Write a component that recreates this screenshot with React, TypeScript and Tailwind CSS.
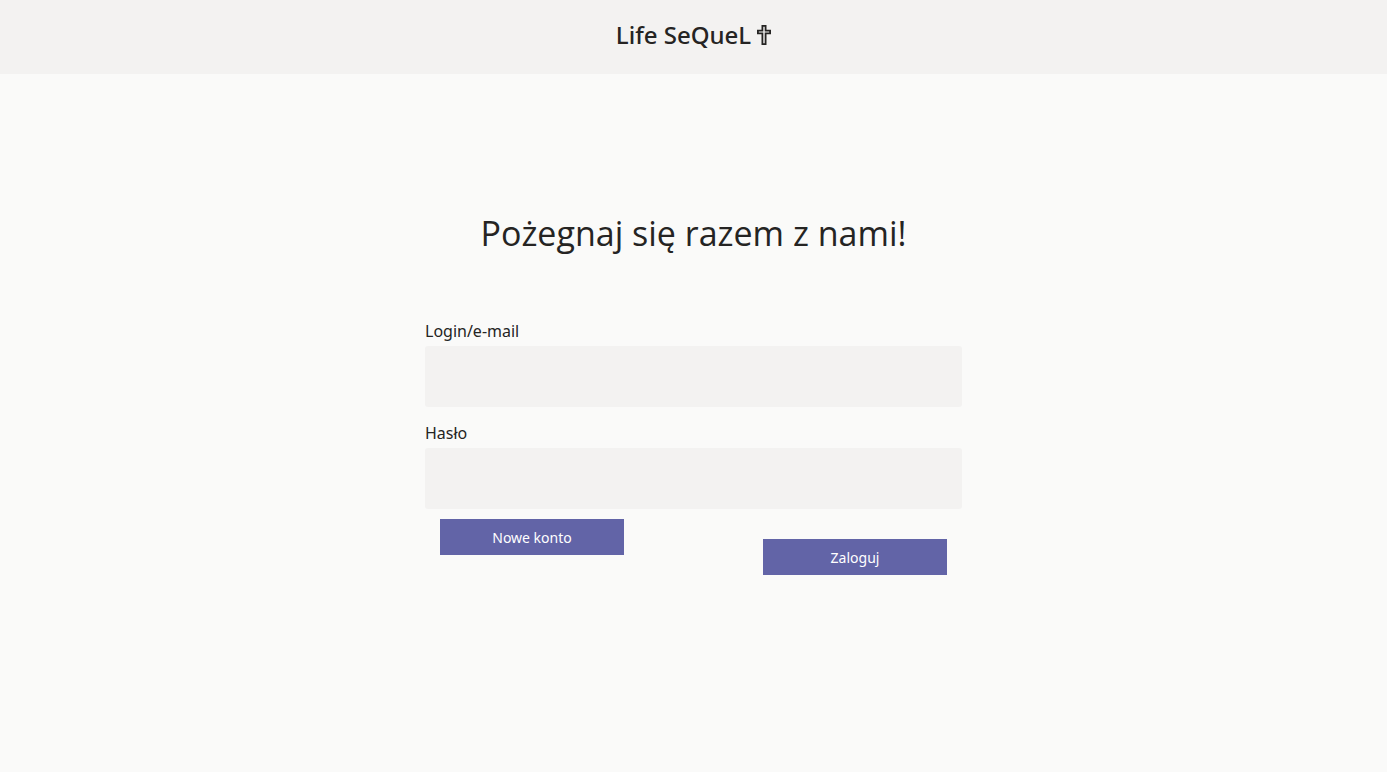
function Field({ id, label, type }: { id: string; label: string; type: string }) {
  return (
    <div className="flex flex-col">
      <label htmlFor={id} className="h-7 text-base leading-[27px]">
        {label}
      </label>
      <input id={id} type={type} className="h-[61px] w-full rounded-[3px] bg-[#f3f2f1] px-3 text-base outline-none" />
    </div>
  );
}

const buttonClass =
  "h-9 w-46 cursor-pointer bg-[#6264a7] pt-px text-sm text-white hover:bg-[#464775]";

export default function App() {
  return (
    <div className="min-h-screen bg-[#fafaf9] font-['Open_Sans',sans-serif] text-[#252423]">
      <header className="flex justify-center bg-[#f3f2f1] pt-[15px] pb-[19px]">
        <h1 className="flex items-center gap-1.5 font-['Noto_Sans',sans-serif] text-2xl leading-10 font-medium">
          Life SeQueL
          <svg viewBox="0 0 14 20" className="h-5 w-3.5" fill="none" stroke="currentColor" strokeWidth="1.8" aria-hidden="true">
            <path d="M5.4 .9h3.2v4.7h4.5v2.8h-4.5v10.7h-3.2v-10.7h-4.5v-2.8h4.5z" />
          </svg>
        </h1>
      </header>
      <main className="mx-auto w-full max-w-[537px] pt-[135px]">
        <h2 className="text-center text-[34px] leading-12">Pożegnaj się razem z nami!</h2>
        <form className="mt-[61px] font-['Noto_Sans',sans-serif]" onSubmit={(e) => e.preventDefault()}>
          <div className="flex flex-col gap-[13px]">
            <Field id="login" label="Login/e-mail" type="text" />
            <Field id="password" label="Hasło" type="password" />
          </div>
          <div className="flex items-start justify-between px-[15px] pt-[10px]">
            <button type="button" className={buttonClass}>
              Nowe konto
            </button>
            <button type="submit" className={`mt-5 ${buttonClass}`}>
              Zaloguj
            </button>
          </div>
        </form>
      </main>
    </div>
  );
}
